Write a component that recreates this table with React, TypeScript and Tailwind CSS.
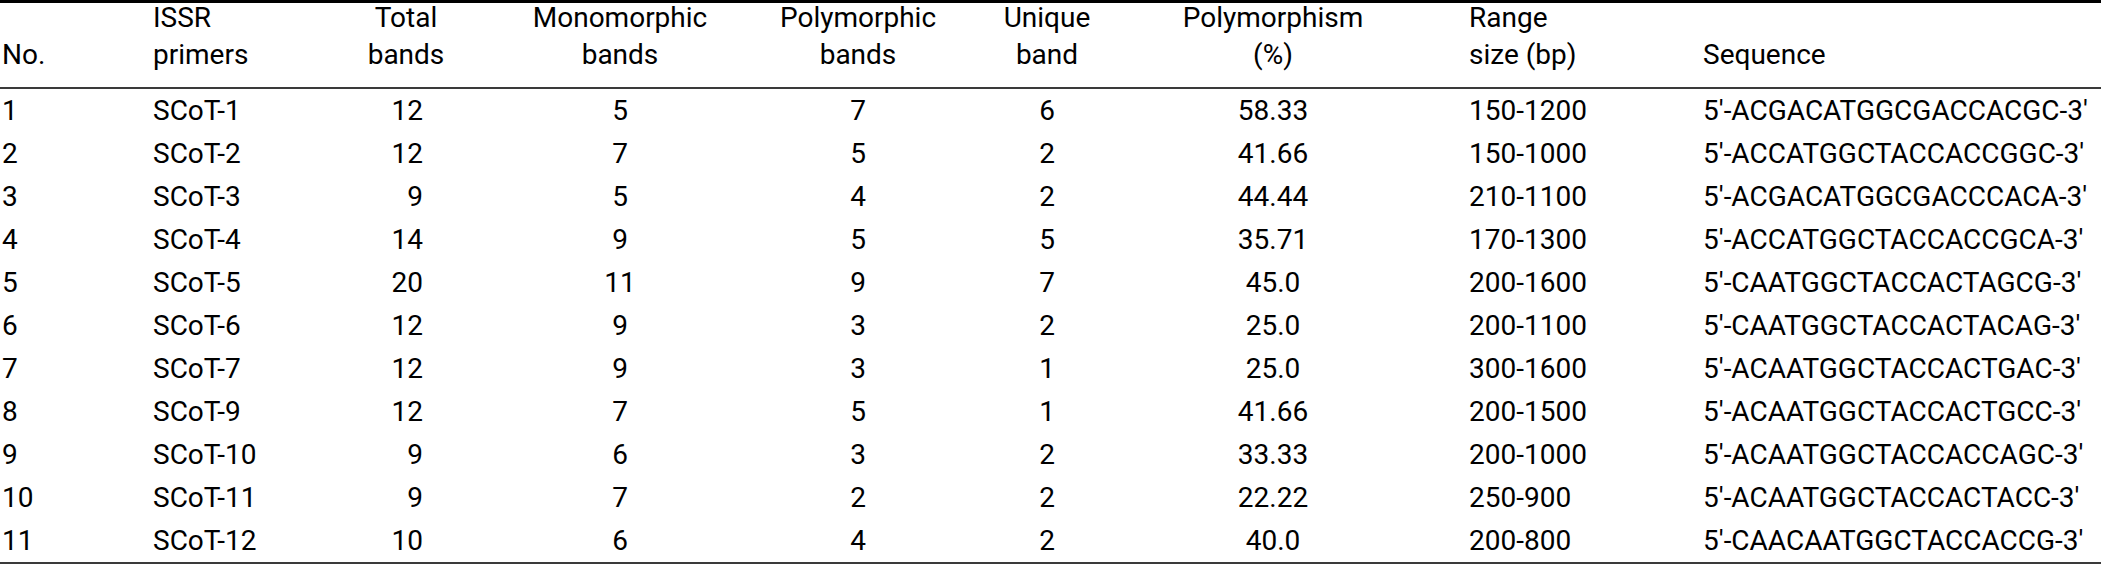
import * as React from "react";

type Align = "left" | "center" | "total";

const cols = "grid grid-cols-[151px_182px_146px_282px_194px_184px_268px_296px_1fr]";

const header: { lines: [string, string]; align: Align; pad?: string }[] = [
  { lines: ["", "No."], align: "left", pad: "pl-[2px]" },
  { lines: ["ISSR", "primers"], align: "left", pad: "pl-[2px]" },
  { lines: ["Total", "bands"], align: "center" },
  { lines: ["Monomorphic", "bands"], align: "center" },
  { lines: ["Polymorphic", "bands"], align: "center" },
  { lines: ["Unique", "band"], align: "center" },
  { lines: ["Polymorphism", "(%)"], align: "center" },
  { lines: ["Range", "size (bp)"], align: "left", pad: "pl-[62px]" },
  { lines: ["", "Sequence"], align: "left" },
];

const rows: string[][] = [
  ["1", "SCoT-1", "12", "5", "7", "6", "58.33", "150-1200", "5'-ACGACATGGCGACCACGC-3'"],
  ["2", "SCoT-2", "12", "7", "5", "2", "41.66", "150-1000", "5'-ACCATGGCTACCACCGGC-3'"],
  ["3", "SCoT-3", "9", "5", "4", "2", "44.44", "210-1100", "5'-ACGACATGGCGACCCACA-3'"],
  ["4", "SCoT-4", "14", "9", "5", "5", "35.71", "170-1300", "5'-ACCATGGCTACCACCGCA-3'"],
  ["5", "SCoT-5", "20", "11", "9", "7", "45.0", "200-1600", "5'-CAATGGCTACCACTAGCG-3'"],
  ["6", "SCoT-6", "12", "9", "3", "2", "25.0", "200-1100", "5'-CAATGGCTACCACTACAG-3'"],
  ["7", "SCoT-7", "12", "9", "3", "1", "25.0", "300-1600", "5'-ACAATGGCTACCACTGAC-3'"],
  ["8", "SCoT-9", "12", "7", "5", "1", "41.66", "200-1500", "5'-ACAATGGCTACCACTGCC-3'"],
  ["9", "SCoT-10", "9", "6", "3", "2", "33.33", "200-1000", "5'-ACAATGGCTACCACCAGC-3'"],
  ["10", "SCoT-11", "9", "7", "2", "2", "22.22", "250-900", "5'-ACAATGGCTACCACTACC-3'"],
  ["11", "SCoT-12", "10", "6", "4", "2", "40.0", "200-800", "5'-CAACAATGGCTACCACCG-3'"],
];

function alignClass(align: Align) {
  if (align === "center") return "justify-center";
  if (align === "total") return "justify-end pr-[56px]";
  return "justify-start";
}

export default function App() {
  return (
    <div className="h-[567px] w-[2101px] bg-white font-['Roboto',_'Liberation_Sans',_sans-serif] text-[28px] text-black">
      {/* en-tête */}
      <div className={`${cols} border-t-[3px] border-b-2 border-t-black border-b-[#3a3a3a] pt-px pb-[14px]`}>
        {header.map((h, i) => (
          <div key={i} className={`flex flex-col ${h.align === "center" ? "items-center" : "items-start"} ${h.pad ?? ""}`}>
            <span className="h-[28px] whitespace-nowrap leading-[28px]">{h.lines[0]}</span>
            <span className="mt-1 h-[37px] whitespace-nowrap leading-[37px]">{h.lines[1]}</span>
          </div>
        ))}
      </div>

      {/* lignes */}
      <div className="border-b-2 border-b-[#3a3a3a]">
        {rows.map((r) => (
          <div key={r[0]} className={`${cols} h-[43px]`}>
            {r.map((v, i) => {
              const h = header[i];
              const align: Align = i === 2 ? "total" : h.align;
              return (
                <div
                  key={i}
                  className={`flex items-center whitespace-nowrap leading-[43px] ${alignClass(align)} ${h.pad ?? ""}`}
                >
                  {v}
                </div>
              );
            })}
          </div>
        ))}
      </div>
    </div>
  );
}
